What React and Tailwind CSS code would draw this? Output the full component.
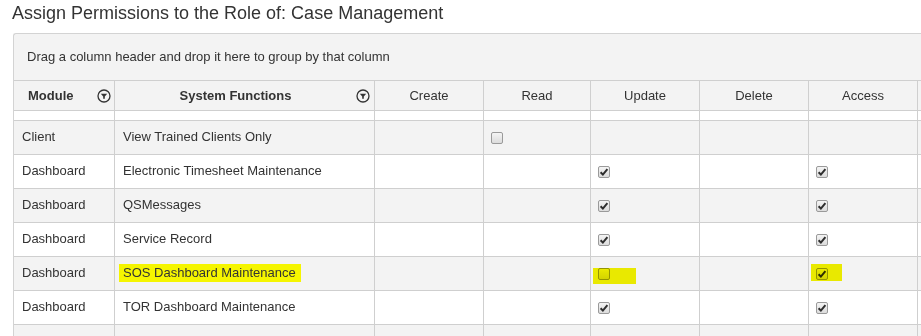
import React from 'react';

const rows = [
    { module: 'Client', fn: 'View Trained Clients Only', read: false },
    { module: 'Dashboard', fn: 'Electronic Timesheet Maintenance', update: true, access: true },
    { module: 'Dashboard', fn: 'QSMessages', update: true, access: true },
    { module: 'Dashboard', fn: 'Service Record', update: true, access: true },
    { module: 'Dashboard', fn: 'SOS Dashboard Maintenance', update: false, access: true, marked: true },
    { module: 'Dashboard', fn: 'TOR Dashboard Maintenance', update: true, access: true },
    { module: 'Employee', fn: 'Applicant Tracking Link', read: false, update: false },
];

const cols = 'grid grid-cols-[101px_260px_109px_107px_109px_109px_109px_120px]';

function Check({ checked }) {
    return (
        <div className="w-[12px] h-[12px] rounded-[2px] border border-[#9a9a9a] bg-gradient-to-b from-[#f4f4f4] to-[#dcdcdc] flex items-center justify-center">
            {checked && (
                <svg width="10" height="10" viewBox="0 0 10 10">
                    <path d="M1.6 5.2 L3.9 7.6 L8.4 2.2" fill="none" stroke="#2e2e2e" strokeWidth="2" />
                </svg>
            )}
        </div>
    );
}

function FilterIcon() {
    return (
        <svg width="14" height="14" viewBox="0 0 14 14">
            <circle cx="7" cy="7" r="6" fill="none" stroke="#333" strokeWidth="1.3" />
            <path d="M3.8 4.8 H10.2 L7.8 7.4 V9.8 L6.2 9.8 V7.4 Z" fill="#333" />
        </svg>
    );
}

function BoxCell({ value, hl }) {
    return (
        <div className="relative border-r border-[#cfcfcf] flex items-center pl-[7px]">
            {value !== undefined && <Check checked={value} />}
            {hl && <div className={`absolute mix-blend-multiply bg-[#f5f500] ${hl}`}></div>}
        </div>
    );
}

export default function App() {
    return (
        <div className="w-[921px] h-[336px] overflow-hidden bg-white text-[#333] font-['Liberation_Sans',Arial,sans-serif]">
            <h1 className="h-[33px] pl-[12px] pt-[1px] text-[18px] leading-[24px] font-normal">
                Assign Permissions to the Role of: Case Management
            </h1>

            <div className="ml-[13px] w-[1000px] border-l border-t border-[#d3d3d3] rounded-tl-[3px] bg-[#f3f3f3] text-[13px]">
                <div className="h-[47px] border-b border-[#cfcfcf] flex items-center pl-[13px]">
                    Drag a column header and drop it here to group by that column
                </div>

                <div className={`${cols} h-[30px] border-b border-[#cfcfcf]`}>
                    <div className="border-r border-[#cfcfcf] flex items-center justify-between pl-[14px] pr-[3px] font-bold">
                        <span>Module</span>
                        <FilterIcon />
                    </div>
                    <div className="border-r border-[#cfcfcf] flex items-center pr-[4px] font-bold">
                        <span className="flex-1 text-center">System Functions</span>
                        <FilterIcon />
                    </div>
                    {['Create', 'Read', 'Update', 'Delete', 'Access'].map((h) => (
                        <div key={h} className="border-r border-[#cfcfcf] flex items-center justify-center">{h}</div>
                    ))}
                    <div></div>
                </div>

                {/* row scrolled partly out of view */}
                <div className={`${cols} h-[10px] border-b border-[#cfcfcf] bg-white`}>
                    {[0, 1, 2, 3, 4, 5, 6].map((i) => (
                        <div key={i} className="border-r border-[#cfcfcf]"></div>
                    ))}
                    <div></div>
                </div>

                {rows.map((r, i) => (
                    <div key={i} className={`${cols} h-[34px] border-b border-[#cfcfcf] ${i % 2 === 0 ? 'bg-[#f3f3f3]' : 'bg-white'}`}>
                        <div className="border-r border-[#cfcfcf] flex items-center pl-[8px] pb-[1px]">{r.module}</div>
                        <div className="border-r border-[#cfcfcf] flex items-center pl-[7px] pb-[1px]">
                            {r.marked ? (
                                <span className="bg-[#f5f500] -ml-[3px] pl-[4px] pr-[5px] leading-[18px]">{r.fn}</span>
                            ) : (
                                <span className="pl-[1px]">{r.fn}</span>
                            )}
                        </div>
                        <BoxCell value={r.create} />
                        <BoxCell value={r.read} />
                        <BoxCell value={r.update} hl={r.marked ? 'left-[2px] top-[11px] w-[43px] h-[16px]' : null} />
                        <BoxCell value={r.delete} />
                        <BoxCell value={r.access} hl={r.marked ? 'left-[2px] top-[7px] w-[31px] h-[17px]' : null} />
                        <div></div>
                    </div>
                ))}
            </div>
        </div>
    );
}
